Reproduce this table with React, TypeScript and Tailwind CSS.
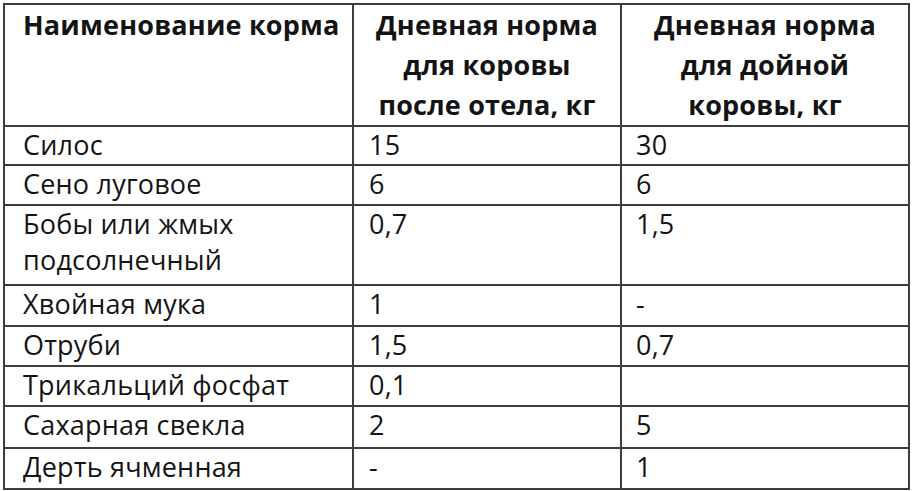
const rows: { name: React.ReactNode; a: string; b: string; h: string }[] = [
  { name: "Силос", a: "15", b: "30", h: "h-[39px]" },
  { name: "Сено луговое", a: "6", b: "6", h: "h-[40px]" },
  { name: <>Бобы или жмых<br />подсолнечный</>, a: "0,7", b: "1,5", h: "h-[80px]" },
  { name: "Хвойная мука", a: "1", b: "-", h: "h-[41px]" },
  { name: "Отруби", a: "1,5", b: "0,7", h: "h-[40px]" },
  { name: "Трикальций фосфат", a: "0,1", b: "", h: "h-[40px]" },
  { name: "Сахарная свекла", a: "2", b: "5", h: "h-[42px]" },
  { name: "Дерть ячменная", a: "-", b: "1", h: "h-[41px]" },
];

const cell = "border-2 border-[#3d3d3d] p-0";

export default function App() {
  return (
    <div className="w-[913px] h-[491px] bg-white pl-[3px] pt-[3px] text-[#141414] font-['Open_Sans','Liberation_Sans',sans-serif]">
      <table className="border-collapse table-fixed w-[905px] text-[27px] leading-[36px] tracking-[0.2px]">
        <colgroup>
          <col className="w-[349px]" />
          <col className="w-[268px]" />
          <col className="w-[288px]" />
        </colgroup>
        <thead>
          <tr className="h-[120px] align-top leading-[40px]">
            <th className={`${cell} text-left font-bold pl-[18px]`}>Наименование корма</th>
            <th className={`${cell} text-center font-bold`}>
              Дневная норма
              <br />
              для коровы
              <br />
              после отела, кг
            </th>
            <th className={`${cell} text-center font-bold`}>
              Дневная норма
              <br />
              для дойной
              <br />
              коровы, кг
            </th>
          </tr>
        </thead>
        <tbody>
          {rows.map((r, i) => (
            <tr key={i} className={`${r.h} align-top`}>
              <td className={`${cell} pl-[18px]`}>{r.name}</td>
              <td className={`${cell} pl-[15px]`}>{r.a}</td>
              <td className={`${cell} pl-[14px]`}>{r.b}</td>
            </tr>
          ))}
        </tbody>
      </table>
    </div>
  );
}
